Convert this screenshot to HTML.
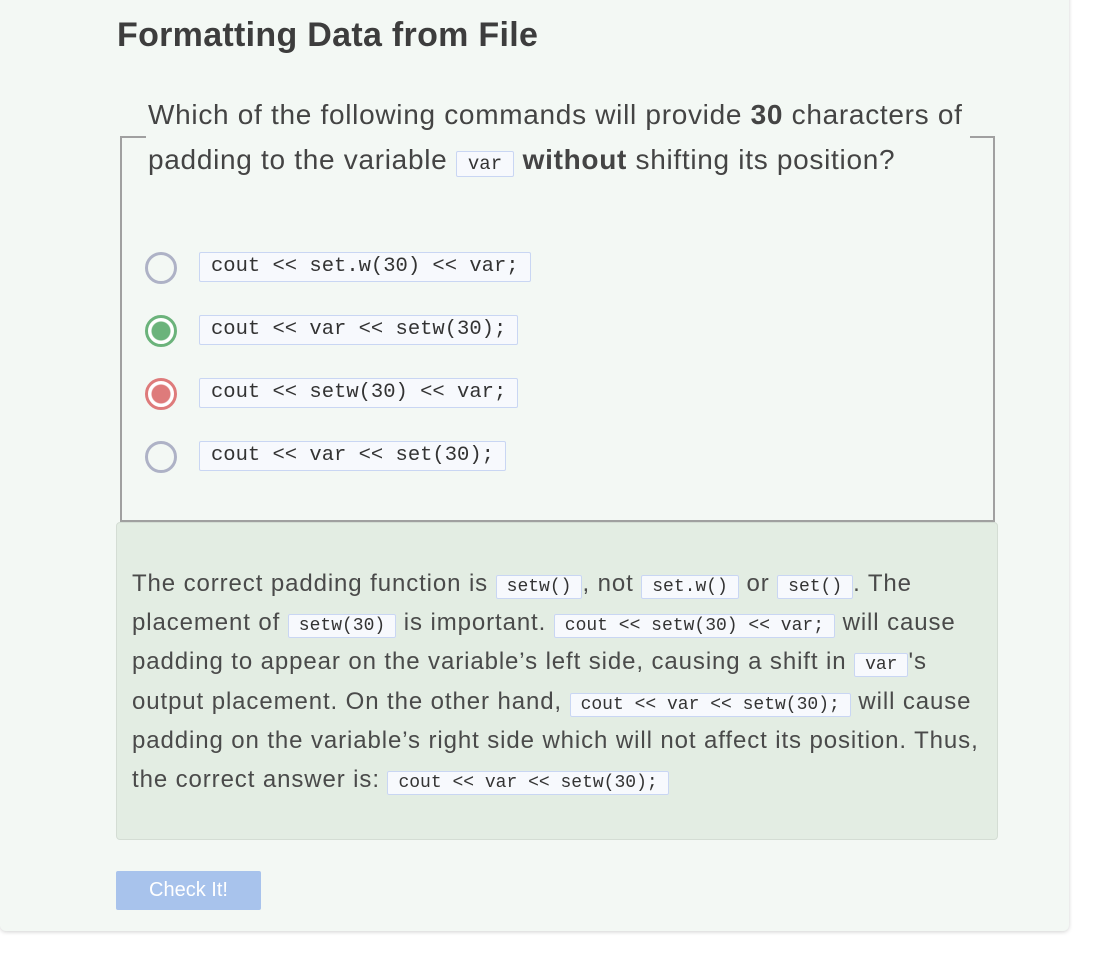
<!DOCTYPE html>
<html><head><style>
body{margin:0;width:1117px;height:960px;background:#fff;font-family:"Liberation Sans",sans-serif;color:#444;position:relative;overflow:hidden}
.card{position:absolute;left:0;top:-10px;width:1069px;height:941px;background:#f3f8f4;border-radius:6px;box-shadow:0 1px 4px rgba(0,0,0,.18)}
h1{position:absolute;left:117px;top:16px;margin:0;font-size:34px;font-weight:bold;color:#3d3d3d;letter-spacing:0.3px}
.q{position:absolute;left:146px;top:92px;width:822px;padding-left:2px;font-size:28px;letter-spacing:0.7px;line-height:45px;color:#444;background:#f3f8f4;white-space:nowrap}
.fs{position:absolute;left:120px;top:136px;width:871px;height:382px;border:2px solid #a0a0a0}
code{font-family:"Liberation Mono",monospace;background:#f7f9fd;border:1px solid #c9d6f3;border-radius:2px;padding:1px 10px;color:#333;letter-spacing:0;line-height:normal}
.q code{font-size:19px;padding:1px 11px}
.opt{position:absolute;left:145px;height:30px}
.opt .r{position:absolute;left:0;top:0;border-radius:50%;border:3px solid #aeb2c6;box-sizing:border-box;width:32px;height:32px}
.opt code{position:absolute;left:54px;top:0;font-size:20.5px;white-space:pre;line-height:26px;padding:1px 11px}
.exp{position:absolute;left:116px;top:522px;width:882px;height:318px;background:#e3ede3;border:1px solid #d4ddd4;border-radius:4px;box-sizing:border-box}
.exp p{margin:0;position:absolute;left:15px;top:41px;width:880px;font-size:24px;letter-spacing:0.9px;line-height:39.2px;color:#4a4a4a;white-space:nowrap}
.exp code{font-size:18px;padding:1px 10px}
.btn{position:absolute;left:116px;top:871px;width:145px;height:39px;background:#a8c3ec;color:#fff;font-size:20px;line-height:39px;text-align:center;border-radius:2px}
</style></head><body>
<div class="card"></div>
<h1>Formatting Data from File</h1>
<div class="fs"></div>
<div class="q">Which of the following commands will provide <b>30</b> characters of<br>padding to the variable <code>var</code> <b>without</b> shifting its position?</div>
<div class="opt" style="top:252px"><div class="r"></div><code>cout &lt;&lt; set.w(30) &lt;&lt; var;</code></div>
<div class="opt" style="top:315px"><div class="r" style="border-color:#6bb37b;background:radial-gradient(circle,#6bb37b 0 9px,#fff 10px)"></div><code>cout &lt;&lt; var &lt;&lt; setw(30);</code></div>
<div class="opt" style="top:378px"><div class="r" style="border-color:#de7b7b;background:radial-gradient(circle,#de7b7b 0 9px,#fff 10px)"></div><code>cout &lt;&lt; setw(30) &lt;&lt; var;</code></div>
<div class="opt" style="top:441px"><div class="r"></div><code>cout &lt;&lt; var &lt;&lt; set(30);</code></div>
<div class="exp"><p>The correct padding function is <code>setw()</code>, not <code>set.w()</code> or <code>set()</code>. The<br>placement of <code>setw(30)</code> is important. <code>cout &lt;&lt; setw(30) &lt;&lt; var;</code> will cause<br>padding to appear on the variable’s left side, causing a shift in <code>var</code>'s<br>output placement. On the other hand, <code>cout &lt;&lt; var &lt;&lt; setw(30);</code> will cause<br>padding on the variable’s right side which will not affect its position. Thus,<br>the correct answer is: <code>cout &lt;&lt; var &lt;&lt; setw(30);</code></p></div>
<div class="btn">Check It!</div>
</body></html>
